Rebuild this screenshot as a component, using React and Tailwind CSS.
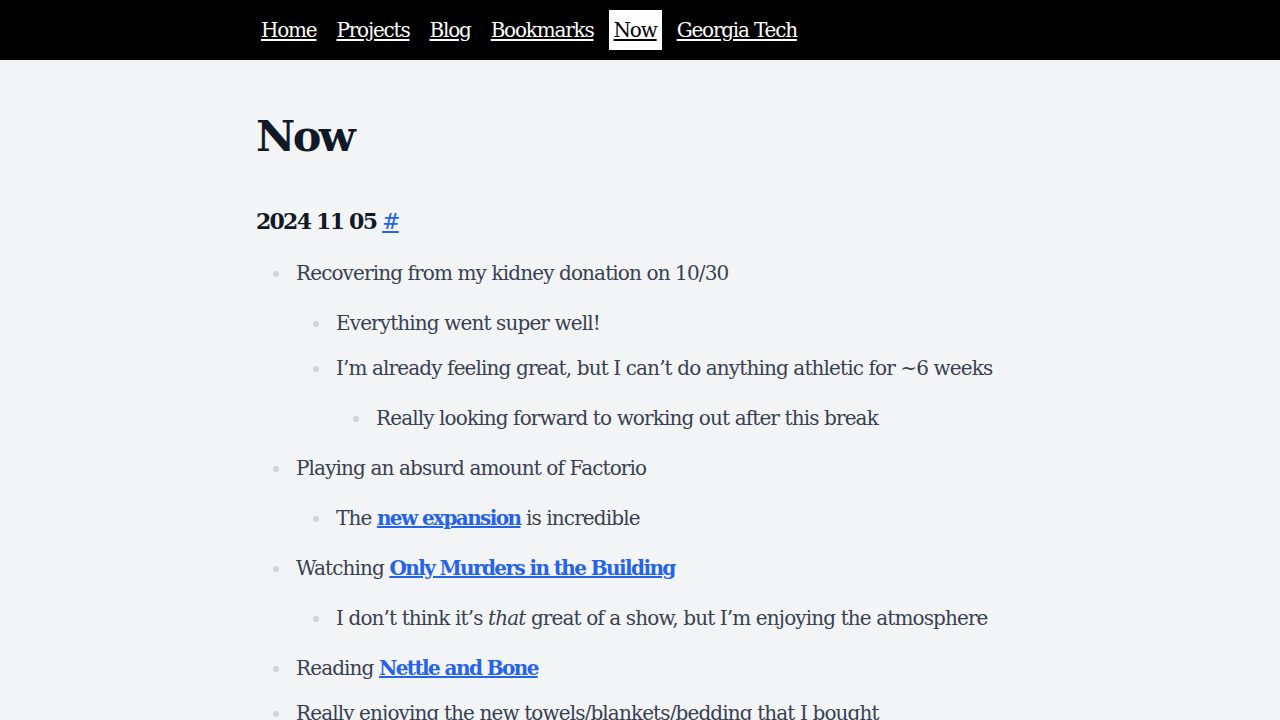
const navLinks = ['Home', 'Projects', 'Blog', 'Bookmarks', 'Now', 'Georgia Tech'];

const Item = ({ children, sub }) => (
  <li className="my-[10px] leading-[35px] pl-[4px]">
    {children}
    {sub && <ul className="my-[15px] list-disc pl-[36px] marker:text-[#d1d5db]">{sub}</ul>}
  </li>
);

const A = ({ children }) => (
  <a href="#" className="font-semibold text-[#2563eb] underline tracking-[-0.08em]">
    {children}
  </a>
);

export default function App() {
  return (
    <div className="min-h-screen bg-[#f3f4f6] font-['DejaVu_Serif',serif] tracking-[-0.055em]">
      <nav className="bg-black h-[60px]">
        <div className="max-w-3xl mx-auto h-full flex items-center gap-[10px]">
          {navLinks.map((l) => (
            <a
              key={l}
              href="#"
              className={
                'h-10 px-[5px] flex items-center text-xl underline underline-offset-2 tracking-[-0.06em] ' +
                (l === 'Now' ? 'bg-white text-black' : 'text-white')
              }
            >
              {l}
            </a>
          ))}
        </div>
      </nav>

      <main className="max-w-3xl mx-auto pt-[55px]">
        <h1 className="text-[43px] font-bold text-[#111827] leading-none tracking-[-0.06em]">Now</h1>
        <h2 className="mt-[47px] text-[22px] font-semibold text-[#111827] tracking-[-0.08em]">
          2024 11 05 <a href="#" className="text-[#2563eb] underline font-normal">#</a>
        </h2>

        <ul className="mt-[18px] list-disc pl-[36px] text-xl text-[#374151] marker:text-[#d1d5db]">
          <Item
            sub={
              <>
                <Item>Everything went super well!</Item>
                <Item
                  sub={<Item>Really looking forward to working out after this break</Item>}
                >
                  I’m already feeling great, but I can’t do anything athletic for ~6 weeks
                </Item>
              </>
            }
          >
            Recovering from my kidney donation on 10/30
          </Item>
          <Item
            sub={
              <Item>
                The <A>new expansion</A> is incredible
              </Item>
            }
          >
            Playing an absurd amount of Factorio
          </Item>
          <Item
            sub={
              <Item>
                I don’t think it’s <em>that</em> great of a show, but I’m enjoying the atmosphere
              </Item>
            }
          >
            Watching <A>Only Murders in the Building</A>
          </Item>
          <Item>
            Reading <A>Nettle and Bone</A>
          </Item>
          <Item>Really enjoying the new towels/blankets/bedding that I bought</Item>
        </ul>
      </main>
    </div>
  );
}
